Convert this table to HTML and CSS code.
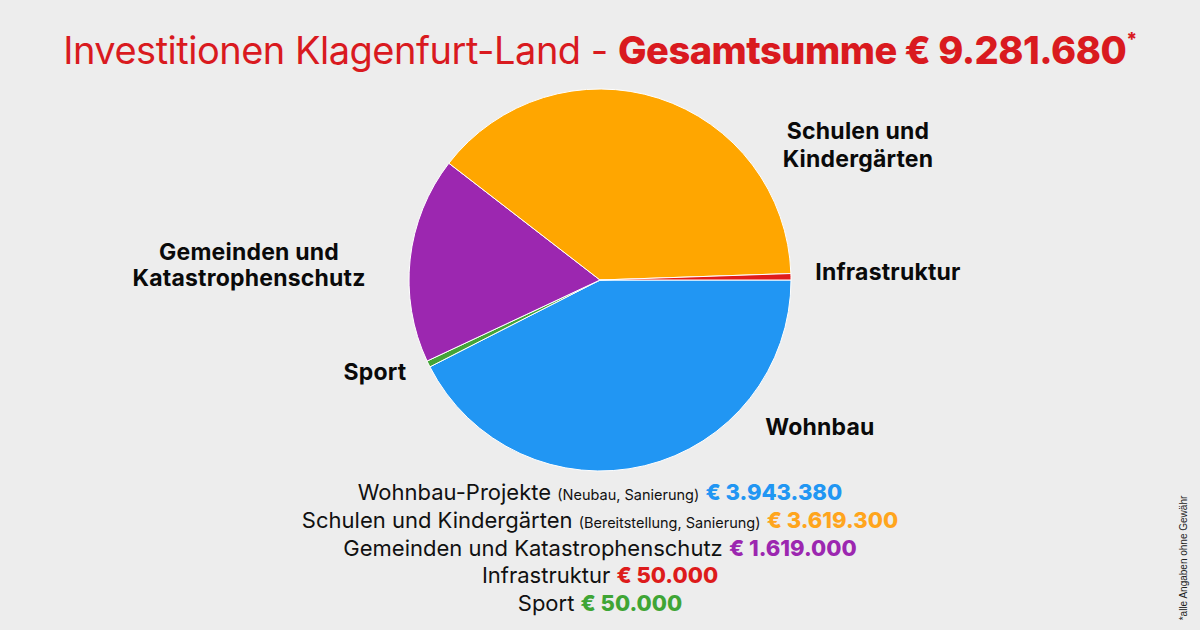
FILE: index.html
```html
<!DOCTYPE html>
<html lang="de">
<head>
<meta charset="utf-8">
<title>Investitionen Klagenfurt-Land</title>
<link rel="stylesheet" href="styles.css">
</head>
<body>
<div class="page">
  <h1 class="title">Investitionen Klagenfurt-Land - <strong>Gesamtsumme € 9.281.680<sup>*</sup></strong></h1>
  <div class="chart">
    <svg class="pie" width="1200" height="390" viewBox="0 85 1200 390" xmlns="http://www.w3.org/2000/svg">
      <g stroke="#ffffff" stroke-width="1" stroke-linejoin="round">
        <path fill="#2196F3" d="M600 280 L791 280 A191 191 0 0 1 429.90 366.87 Z"/>
        <path fill="#43A437" d="M600 280 L429.90 366.87 A191 191 0 0 1 427.05 361.06 Z"/>
        <path fill="#9C27B0" d="M600 280 L427.05 361.06 A191 191 0 0 1 448.85 163.23 Z"/>
        <path fill="#FFA600" d="M600 280 L448.85 163.23 A191 191 0 0 1 790.89 273.54 Z"/>
        <path fill="#E01B1B" d="M600 280 L790.89 273.54 A191 191 0 0 1 791 280 Z"/>
      </g>
      <g class="lbl" text-anchor="middle">
        <text x="858" y="139">Schulen und</text>
        <text x="858" y="167">Kindergärten</text>
        <text x="888" y="280">Infrastruktur</text>
        <text x="249" y="260">Gemeinden und</text>
        <text x="249" y="286">Katastrophenschutz</text>
        <text x="375" y="380">Sport</text>
        <text x="820" y="435">Wohnbau</text>
      </g>
    </svg>
  </div>
  <ul class="legend">
    <li>Wohnbau-Projekte <small>(Neubau, Sanierung)</small> <b class="c-blue">€ 3.943.380</b></li>
    <li>Schulen und Kindergärten <small>(Bereitstellung, Sanierung)</small> <b class="c-orange">€ 3.619.300</b></li>
    <li>Gemeinden und Katastrophenschutz <b class="c-purple">€ 1.619.000</b></li>
    <li>Infrastruktur <b class="c-red">€ 50.000</b></li>
    <li>Sport <b class="c-green">€ 50.000</b></li>
  </ul>
  <p class="note">*alle Angaben ohne Gewähr</p>
</div>
</body>
</html>
```

FILE: styles.css
```css
html, body {
  margin: 0;
  padding: 0;
}
body {
  background: #EDEDED;
  font-family: Inter, "Noto Sans", "Liberation Sans", sans-serif;
  color: #111111;
}
.page {
  position: relative;
  width: 1200px;
  height: 630px;
  overflow: hidden;
}
.title {
  margin: 0;
  padding-top: 27px;
  height: 58px;
  box-sizing: content-box;
  text-align: center;
  font-size: 38px;
  line-height: 46px;
  font-weight: 400;
  color: #D91A1F;
  letter-spacing: -0.5px;
  white-space: nowrap;
}
.title strong {
  font-weight: 800;
}
.title sup {
  font-size: 19px;
  vertical-align: top;
  line-height: 19px;
  position: relative;
  top: 3px;
}
.chart {
  height: 390px;
}
.pie {
  display: block;
}
.lbl text {
  font-family: Inter, "Noto Sans", "Liberation Sans", sans-serif;
  font-weight: 700;
  font-size: 23px;
  letter-spacing: 0.2px;
  fill: #0A0A0A;
}
.legend {
  list-style: none;
  margin: 4px 0 0;
  padding: 0;
  text-align: center;
  font-size: 22px;
  color: #111111;
  white-space: nowrap;
}
.legend li {
  height: 27.75px;
  line-height: 27.75px;
}
.legend small {
  font-size: 14.5px;
  line-height: 1;
}
.legend b {
  font-weight: 800;
  line-height: 1;
}
.c-blue { color: #2196F3; }
.c-orange { color: #FFA51D; }
.c-purple { color: #9C27B0; }
.c-red { color: #DD1B1B; }
.c-green { color: #3FA535; }
.note {
  position: absolute;
  margin: 0;
  left: 1183px;
  top: 558px;
  transform: translate(-50%, -50%) rotate(-90deg);
  font-family: "Liberation Sans", Arial, sans-serif;
  font-size: 10px;
  color: #222222;
  white-space: nowrap;
}
```
